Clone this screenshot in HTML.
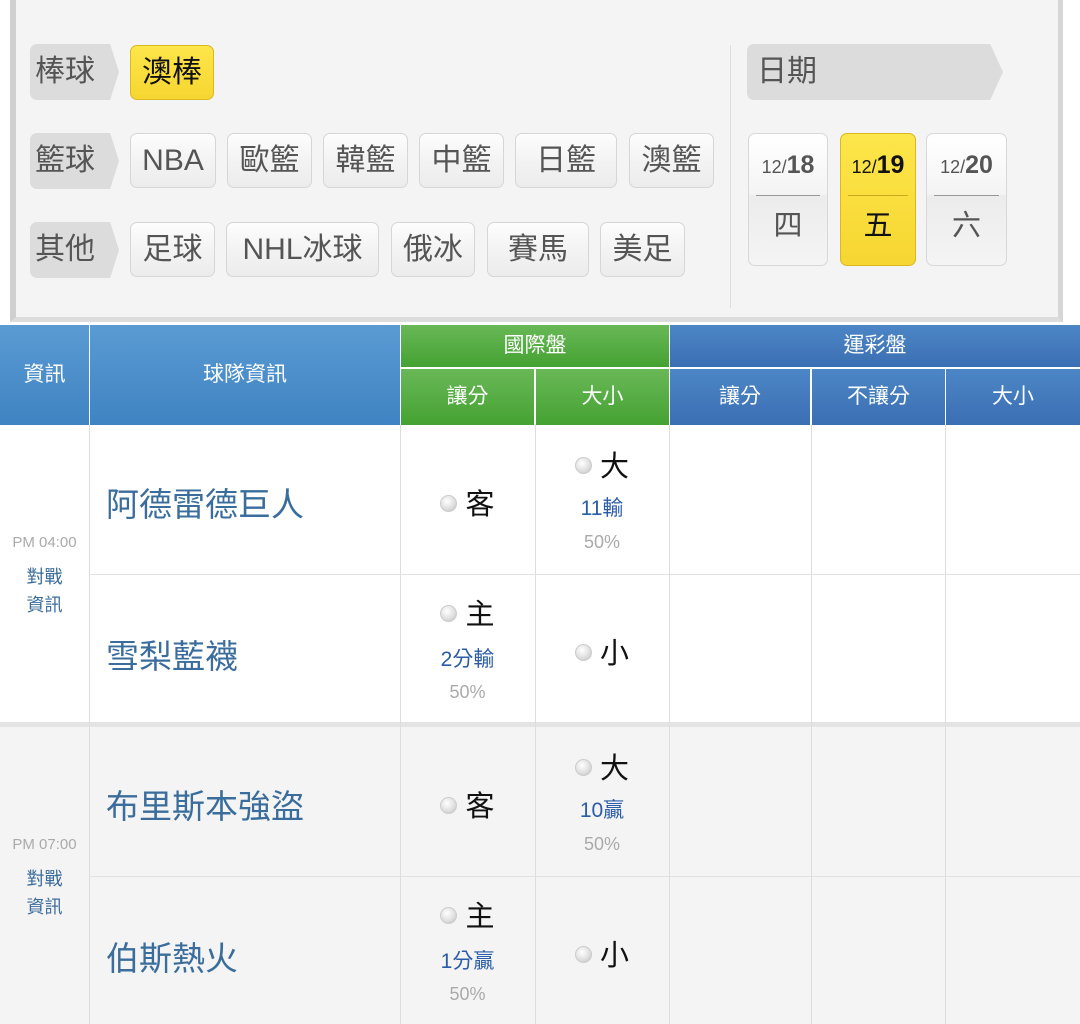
<!DOCTYPE html>
<html><head><meta charset="utf-8"><style>
*{margin:0;padding:0;box-sizing:border-box}
body{width:1080px;height:1024px;position:relative;background:#fff;overflow:hidden;font-family:"Liberation Sans","Noto Sans CJK TC",sans-serif}
.a{position:absolute}
.panel{left:10px;top:0;width:1053px;height:322px;background:#f4f4f4;border-left:6px solid #cfcfcf;border-right:5px solid #d6d6d6;border-bottom:5px solid #dcdcdc}
.lab{position:absolute;height:56px;background:#dcdcdc;color:#555;font-size:30px;line-height:56px;padding-left:5px;border-radius:7px 0 0 7px;clip-path:polygon(0 0,90% 0,100% 50%,90% 100%,0 100%)}
.btn{position:absolute;height:55px;background:linear-gradient(#fdfdfd,#f3f3f3 50%,#ececec);border:1px solid #d6d6d6;border-radius:7px;color:#555;font-size:30px;line-height:53px;text-align:center;white-space:nowrap}
.sel{background:linear-gradient(#fde64a,#f6d631);border-color:#d9b820;color:#111}
.date{position:absolute;top:133px;height:133px;border:1px solid #d8d8d8;border-radius:7px;background:linear-gradient(#fff,#f4f4f4 46%,#ececec 47%,#f4f4f4);text-align:center;color:#555}
.date .d{font-size:18px;margin-top:17px;height:44px}
.date .d b{font-size:25px}
.date .ln{height:1px;background:#999;margin:0 7px}
.date .w{font-size:29px;margin-top:6px}
.h{color:#fff;font-size:21px;text-align:center;position:absolute}
.bl{background:linear-gradient(#5a9bd3,#3f83c2)}
.gr{background:linear-gradient(#69b857,#45a232)}
.db{background:linear-gradient(#4c86c6,#3b6fb3)}
.vl{position:absolute;width:1px;background:#ddd}
.hl{position:absolute;height:1px;background:#e2e2e2}
.t{position:absolute;color:#3a6d9c;font-size:33px}
.r{display:inline-block;width:17px;height:17px;border-radius:50%;background:radial-gradient(circle at 40% 35%,#fff,#ddd 60%,#bbb);border:1px solid #ccc;vertical-align:middle;margin-right:8px;position:relative;top:-3px}
.c{position:absolute;text-align:center;font-size:29px;color:#111}
.bn{position:absolute;text-align:center;color:#2a5ca8;font-size:21px}
.p{position:absolute;text-align:center;color:#aaa;font-size:18px}
.tm{position:absolute;left:0;width:89px;text-align:center;color:#aaa;font-size:15px}
.vs{position:absolute;left:0;width:89px;text-align:center;color:#3a6d9c;font-size:18px;line-height:28px}
</style></head><body>
<div class="a panel"></div>
<div class="lab" style="left:30px;top:44px;width:89px">棒球</div>
<div class="btn sel" style="left:130px;top:45px;width:84px">澳棒</div>
<div class="lab" style="left:30px;top:133px;width:89px">籃球</div>
<div class="btn" style="left:130px;top:133px;width:86px">NBA</div>
<div class="btn" style="left:227px;top:133px;width:85px">歐籃</div>
<div class="btn" style="left:323px;top:133px;width:85px">韓籃</div>
<div class="btn" style="left:419px;top:133px;width:85px">中籃</div>
<div class="btn" style="left:515px;top:133px;width:102px">日籃</div>
<div class="btn" style="left:629px;top:133px;width:85px">澳籃</div>
<div class="lab" style="left:30px;top:222px;width:89px">其他</div>
<div class="btn" style="left:130px;top:222px;width:85px">足球</div>
<div class="btn" style="left:226px;top:222px;width:153px">NHL冰球</div>
<div class="btn" style="left:391px;top:222px;width:84px">俄冰</div>
<div class="btn" style="left:487px;top:222px;width:102px">賽馬</div>
<div class="btn" style="left:600px;top:222px;width:85px">美足</div>
<div class="a" style="left:730px;top:45px;width:1px;height:263px;background:#ddd"></div>
<div class="lab" style="left:747px;top:44px;width:256px;padding-left:10px;clip-path:polygon(0 0,95% 0,100% 50%,95% 100%,0 100%)">日期</div>
<div class="date" style="left:748px;width:80px"><div class="d">12/<b>18</b></div><div class="ln"></div><div class="w">四</div></div>
<div class="date" style="left:840px;width:76px;background:linear-gradient(#fde64a,#f6d631);border-color:#d9b820;color:#111"><div class="d">12/<b>19</b></div><div class="ln" style="background:#c9ab20"></div><div class="w">五</div></div>
<div class="date" style="left:926px;width:81px"><div class="d">12/<b>20</b></div><div class="ln"></div><div class="w">六</div></div>

<div class="h bl" style="left:0;top:325px;width:89px;height:100px;line-height:100px">資訊</div>
<div class="h bl" style="left:90px;top:325px;width:310px;height:100px;line-height:100px">球隊資訊</div>
<div class="h gr" style="left:401px;top:325px;width:268px;height:42px;line-height:42px">國際盤</div>
<div class="h gr" style="left:401px;top:369px;width:133px;height:56px;line-height:56px">讓分</div>
<div class="h gr" style="left:536px;top:369px;width:133px;height:56px;line-height:56px">大小</div>
<div class="h db" style="left:670px;top:325px;width:410px;height:42px;line-height:42px">運彩盤</div>
<div class="h db" style="left:670px;top:369px;width:140px;height:56px;line-height:56px">讓分</div>
<div class="h db" style="left:812px;top:369px;width:133px;height:56px;line-height:56px">不讓分</div>
<div class="h db" style="left:946px;top:369px;width:134px;height:56px;line-height:56px">大小</div>

<div class="a" style="left:0;top:722px;width:1080px;height:5px;background:#e4e4e4"></div>
<div class="a" style="left:0;top:727px;width:1080px;height:297px;background:#f4f4f4"></div>
<div class="vl" style="left:89px;top:425px;height:599px"></div>
<div class="vl" style="left:400px;top:425px;height:599px"></div>
<div class="vl" style="left:535px;top:425px;height:599px"></div>
<div class="vl" style="left:669px;top:425px;height:599px"></div>
<div class="vl" style="left:811px;top:425px;height:599px"></div>
<div class="vl" style="left:945px;top:425px;height:599px"></div>
<div class="hl" style="left:89px;top:574px;width:991px"></div>
<div class="hl" style="left:89px;top:876px;width:991px"></div>

<div class="tm" style="top:534px">PM 04:00</div>
<div class="vs" style="top:563px">對戰<br>資訊</div>
<div class="t" style="left:106px;top:478px">阿德雷德巨人</div>
<div class="t" style="left:106px;top:630px">雪梨藍襪</div>
<div class="c" style="left:400px;width:135px;top:481px"><span class="r"></span>客</div>
<div class="c" style="left:535px;width:134px;top:443px"><span class="r"></span>大</div>
<div class="bn" style="left:535px;width:134px;top:492px">11輸</div>
<div class="p" style="left:535px;width:134px;top:532px">50%</div>
<div class="c" style="left:400px;width:135px;top:591px"><span class="r"></span>主</div>
<div class="bn" style="left:400px;width:135px;top:643px">2分輸</div>
<div class="p" style="left:400px;width:135px;top:682px">50%</div>
<div class="c" style="left:535px;width:134px;top:630px"><span class="r"></span>小</div>

<div class="tm" style="top:836px">PM 07:00</div>
<div class="vs" style="top:865px">對戰<br>資訊</div>
<div class="t" style="left:106px;top:780px">布里斯本強盜</div>
<div class="t" style="left:106px;top:932px">伯斯熱火</div>
<div class="c" style="left:400px;width:135px;top:783px"><span class="r"></span>客</div>
<div class="c" style="left:535px;width:134px;top:745px"><span class="r"></span>大</div>
<div class="bn" style="left:535px;width:134px;top:794px">10贏</div>
<div class="p" style="left:535px;width:134px;top:834px">50%</div>
<div class="c" style="left:400px;width:135px;top:893px"><span class="r"></span>主</div>
<div class="bn" style="left:400px;width:135px;top:945px">1分贏</div>
<div class="p" style="left:400px;width:135px;top:984px">50%</div>
<div class="c" style="left:535px;width:134px;top:932px"><span class="r"></span>小</div>
</body></html>
